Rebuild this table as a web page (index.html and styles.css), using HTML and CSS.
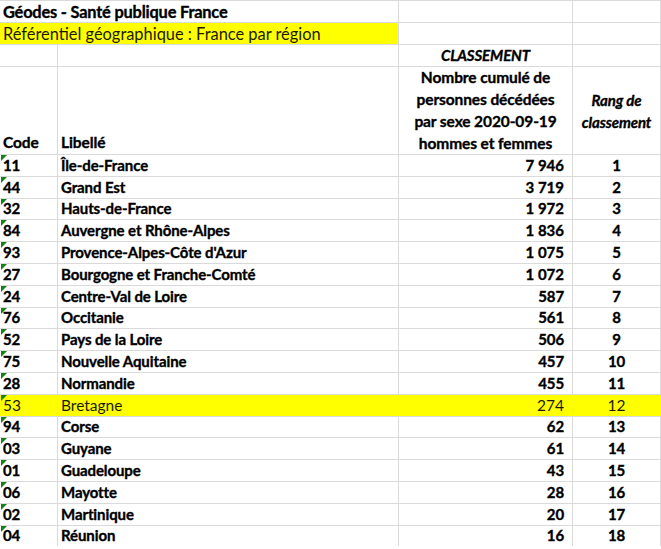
FILE: index.html
```html
<!DOCTYPE html>
<html lang="fr">
<head>
<meta charset="utf-8">
<title>Géodes - Santé publique France</title>
<link rel="stylesheet" href="styles.css">
</head>
<body>
<div class="sheet">
  <div class="c span2 title">Géodes - Santé publique France</div>
  <div class="c"></div>
  <div class="c"></div>

  <div class="c span2 ref">Référentiel géographique : France par région</div>
  <div class="c"></div>
  <div class="c"></div>

  <div class="c"></div>
  <div class="c"></div>
  <div class="c center ital">CLASSEMENT</div>
  <div class="c"></div>

  <div class="c head bottom">Code</div>
  <div class="c head bottom lib">Libellé</div>
  <div class="c head multi">Nombre cumulé de<br>personnes décédées<br>par sexe 2020-09-19<br>hommes et femmes</div>
  <div class="c head middle ital">Rang de<br>classement</div>

  <div class="c code">11</div><div class="c lib">Île-de-France</div><div class="c num">7&#8239;946</div><div class="c rank">1</div>
  <div class="c code">44</div><div class="c lib">Grand Est</div><div class="c num">3&#8239;719</div><div class="c rank">2</div>
  <div class="c code">32</div><div class="c lib">Hauts-de-France</div><div class="c num">1&#8239;972</div><div class="c rank">3</div>
  <div class="c code">84</div><div class="c lib">Auvergne et Rhône-Alpes</div><div class="c num">1&#8239;836</div><div class="c rank">4</div>
  <div class="c code">93</div><div class="c lib">Provence-Alpes-Côte d'Azur</div><div class="c num">1&#8239;075</div><div class="c rank">5</div>
  <div class="c code">27</div><div class="c lib">Bourgogne et Franche-Comté</div><div class="c num">1&#8239;072</div><div class="c rank">6</div>
  <div class="c code">24</div><div class="c lib">Centre-Val de Loire</div><div class="c num">587</div><div class="c rank">7</div>
  <div class="c code">76</div><div class="c lib">Occitanie</div><div class="c num">561</div><div class="c rank">8</div>
  <div class="c code">52</div><div class="c lib">Pays de la Loire</div><div class="c num">506</div><div class="c rank">9</div>
  <div class="c code">75</div><div class="c lib">Nouvelle Aquitaine</div><div class="c num">457</div><div class="c rank">10</div>
  <div class="c code">28</div><div class="c lib">Normandie</div><div class="c num">455</div><div class="c rank">11</div>
  <div class="c code hl">53</div><div class="c lib hl">Bretagne</div><div class="c num hl">274</div><div class="c rank hl">12</div>
  <div class="c code">94</div><div class="c lib">Corse</div><div class="c num">62</div><div class="c rank">13</div>
  <div class="c code">03</div><div class="c lib">Guyane</div><div class="c num">61</div><div class="c rank">14</div>
  <div class="c code">01</div><div class="c lib">Guadeloupe</div><div class="c num">43</div><div class="c rank">15</div>
  <div class="c code">06</div><div class="c lib">Mayotte</div><div class="c num">28</div><div class="c rank">16</div>
  <div class="c code">02</div><div class="c lib">Martinique</div><div class="c num">20</div><div class="c rank">17</div>
  <div class="c code">04</div><div class="c lib">Réunion</div><div class="c num">16</div><div class="c rank">18</div>
</div>
</body>
</html>
```
FILE: styles.css
```css
html, body {
  margin: 0;
  padding: 0;
  background: #ffffff;
}
body {
  font-family: "Lato", "Liberation Sans", sans-serif;
  font-size: 15px;
  font-weight: 700;
  color: #000000;
  overflow: hidden;
  letter-spacing: -0.1px;
  -webkit-text-stroke: 0.35px #000000;
}
.sheet {
  display: grid;
  grid-template-columns: 57px 340px 173px 87px;
  grid-template-rows: 21px 21px 21px 87px repeat(18, 20.8px);
  gap: 1px;
  padding: 1px 1px 0 0;
  width: 660px;
  background: #dadada;
}
.c {
  background: #ffffff;
  display: flex;
  align-items: flex-end;
  padding: 0 3px 2px 3px;
  white-space: nowrap;
  line-height: 18px;
  position: relative;
  overflow: visible;
}
.span2 { grid-column: span 2; }
.title {
  font-size: 16.4px;
  letter-spacing: -0.2px;
  padding-bottom: 1px;
}
.ref {
  background: #ffff00;
  font-weight: 400;
  font-size: 16.4px;
  letter-spacing: 0;
  color: #1a1a00;
  -webkit-text-stroke: 0;
  padding-bottom: 1px;
}
.center { justify-content: center; }
.ital { font-style: italic; }
.head.bottom { padding-bottom: 3px; font-size: 15.5px; }
.head.multi {
  flex-direction: column;
  justify-content: flex-end;
  align-items: center;
  text-align: center;
  line-height: 22px;
  padding-bottom: 0;
  font-size: 15.5px;
}
.head.middle {
  align-items: center;
  justify-content: center;
  text-align: center;
  line-height: 22px;
  padding-bottom: 0;
}
.lib { padding-left: 3px; }
.code::before {
  content: "";
  position: absolute;
  left: 1px;
  top: 0;
  width: 0;
  height: 0;
  border-top: 6px solid #17801a;
  border-right: 6px solid transparent;
}
.num {
  justify-content: flex-end;
  padding-right: 8px;
}
.rank { justify-content: center; }
.hl {
  background: #ffff00;
  font-weight: 400;
  font-size: 15.5px;
  letter-spacing: 0;
  color: #1a1a00;
  -webkit-text-stroke: 0;
  box-shadow: 1px 0 0 #ffff00;
}
```
